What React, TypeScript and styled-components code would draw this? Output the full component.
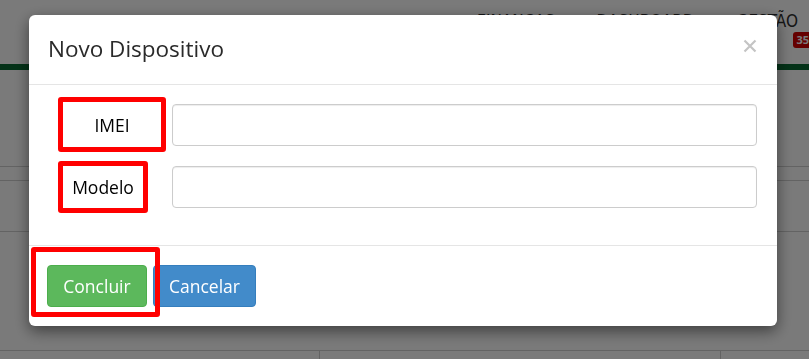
import React from 'react'
import styled, { createGlobalStyle } from 'styled-components'

const GlobalStyle = createGlobalStyle`
  * { box-sizing: border-box; }
  html, body { margin: 0; padding: 0; background: #ffffff; }
  body {
    font-family: 'Open Sans', 'Liberation Sans', sans-serif;
    color: #333333;
    overflow: hidden;
  }
`

/* page behind the dialog */
const Page = styled.div`
  width: 809px;
  height: 359px;
  background: #ffffff;
`

const Navbar = styled.header`
  height: 70px;
  display: flex;
  justify-content: flex-end;
  align-items: flex-start;
  padding: 11px 11px 0 0;
  border-bottom: 6px solid #0a6a33;
  position: relative;
`

const NavItem = styled.span`
  font-family: 'DejaVu Sans Condensed', 'DejaVu Sans', sans-serif;
  font-stretch: condensed;
  font-size: 17px;
  color: #2e2e2e;
  text-transform: uppercase;
  margin-left: 42px;
`

const Badge = styled.span`
  position: absolute;
  right: -6px;
  top: 32px;
  height: 16px;
  line-height: 16px;
  background: #d40000;
  color: #ffffff;
  font-size: 11px;
  font-weight: 700;
  padding: 0 6px 0 3px;
  border-radius: 3px;
`

const Section = styled.div<{ $h: number }>`
  height: ${(p) => p.$h}px;
  border-bottom: 1px solid #d0d0d0;
`

const BottomGrid = styled.div`
  display: grid;
  grid-template-columns: 320px 401px 1fr;
  margin-top: 118px;
  border-top: 1px solid #d0d0d0;
  height: 20px;
`

const Cell = styled.div`
  border-right: 1px solid #d0d0d0;
`

/* dialog */
const Overlay = styled.div`
  position: fixed;
  inset: 0;
  background: rgba(0, 0, 0, 0.52);
`

const Modal = styled.div`
  width: 748px;
  margin: 15px 0 0 29px;
  background: #ffffff;
  border-radius: 6px;
  box-shadow: 0 5px 15px rgba(0, 0, 0, 0.5);
`

const ModalHeader = styled.div`
  height: 70px;
  display: flex;
  align-items: center;
  justify-content: space-between;
  padding: 0 20px 2px 19px;
  border-bottom: 1px solid #e5e5e5;
`

const Title = styled.h4`
  margin: 0;
  font-size: 22.5px;
  font-weight: 400;
  color: #2a2a2a;
`

const Close = styled.button`
  border: 0;
  background: transparent;
  padding: 0;
  width: 14px;
  height: 14px;
  margin-top: -6px;
  color: #c4c4c4;
  cursor: pointer;

  svg {
    display: block;
  }
`

const ModalBody = styled.div`
  display: grid;
  grid-template-columns: 114px 1fr;
  align-items: center;
  row-gap: 9px;
  padding: 12px 20px 32px 29px;
`

const Label = styled.label<{ $w: number; $h: number }>`
  width: ${(p) => p.$w}px;
  height: ${(p) => p.$h}px;
  display: flex;
  align-items: center;
  justify-content: center;
  border: 5px solid #ff0000;
  border-radius: 3px;
  font-size: 17.5px;
  font-weight: 500;
  color: #000000;
`

const Input = styled.input`
  height: 42px;
  width: 100%;
  border: 1px solid #cccccc;
  border-radius: 4px;
  box-shadow: inset 0 1px 1px rgba(0, 0, 0, 0.075);
  font-size: 17px;
  padding: 6px 12px;
  font-family: 'Open Sans', sans-serif;
`

const ModalFooter = styled.div`
  display: flex;
  align-items: center;
  padding: 19px 18px;
  border-top: 1px solid #e5e5e5;
`

const Marked = styled.span`
  position: relative;
  display: inline-flex;
  margin-right: 6px;

  &::after {
    content: '';
    position: absolute;
    left: -16px;
    top: -18px;
    right: -13px;
    bottom: -10px;
    border: 5px solid #ff0000;
    border-radius: 3px;
    pointer-events: none;
    z-index: 2;
  }
`

const Button = styled.button<{ $variant: 'success' | 'primary'; $w: number }>`
  width: ${(p) => p.$w}px;
  height: 42px;
  padding: 0;
  font-family: 'Open Sans', sans-serif;
  font-size: 17.5px;
  color: #ffffff;
  border-radius: 4px;
  border: 1px solid ${(p) => (p.$variant === 'success' ? '#4cae4c' : '#357ebd')};
  background: ${(p) => (p.$variant === 'success' ? '#5cb85c' : '#428bca')};
  cursor: pointer;
`

export default function App() {
  return (
    <>
      <GlobalStyle />
      <Page>
        <Navbar>
          <NavItem>Finanças</NavItem>
          <NavItem>Dashboard</NavItem>
          <NavItem>Gestão</NavItem>
          <Badge>35</Badge>
        </Navbar>
        <Section $h={97} />
        <Section $h={14} />
        <Section $h={51} />
        <BottomGrid>
          <Cell />
          <Cell />
          <div />
        </BottomGrid>
      </Page>
      <Overlay>
        <Modal role="dialog">
          <ModalHeader>
            <Title>Novo Dispositivo</Title>
            <Close aria-label="Fechar">
              <svg width="14" height="14" viewBox="0 0 14 14">
                <path d="M1.5 1.5 L12.5 12.5 M12.5 1.5 L1.5 12.5" stroke="currentColor" strokeWidth="2.2" />
              </svg>
            </Close>
          </ModalHeader>
          <ModalBody>
            <Label $w={108} $h={55}>IMEI</Label>
            <Input />
            <Label $w={90} $h={52}>Modelo</Label>
            <Input />
          </ModalBody>
          <ModalFooter>
            <Marked>
              <Button $variant="success" $w={100}>Concluir</Button>
            </Marked>
            <Button $variant="primary" $w={103}>Cancelar</Button>
          </ModalFooter>
        </Modal>
      </Overlay>
    </>
  )
}
